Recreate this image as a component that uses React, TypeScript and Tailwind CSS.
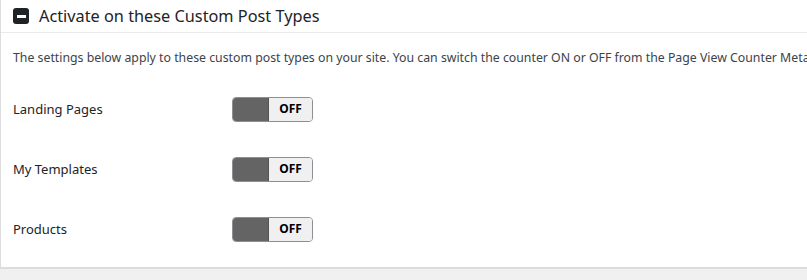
const postTypes = ["Landing Pages", "My Templates", "Products"]

function Toggle() {
  return (
    <div className="flex h-[25px] w-[81px] overflow-hidden rounded-[4px] border border-[#8c8f94]">
      <div className="w-[35px] bg-[#646464]" />
      <div className="flex flex-1 items-center justify-center border-l border-[#555] bg-[#f0f0f0] text-[12px] font-bold text-black">
        OFF
      </div>
    </div>
  )
}

export default function App() {
  return (
    <div
      className="h-[280px] w-[807px] overflow-hidden bg-[#f0f0f1]"
      style={{ fontFamily: '"Noto Sans", sans-serif' }}
    >
      <div className="w-[830px] border-b-2 border-l border-[#dcdcde] bg-white">
        <div className="flex h-[33px] items-center gap-[10px] border-b border-[#ebebeb] pl-[12px]">
          <div className="flex h-[16px] w-[16px] items-center justify-center rounded-[3px] bg-[#1d2327]">
            <div className="h-[3px] w-[9px] bg-white" />
          </div>
          <h2 className="text-[16.3px] text-[#1d2327]">Activate on these Custom Post Types</h2>
        </div>
        <p className="whitespace-nowrap pl-[12px] pt-[16px] text-[12.3px] text-[#3c434a]">
          The settings below apply to these custom post types on your site. You can switch the counter ON or OFF from the Page View Counter Metabox.
        </p>
        <div className="pb-[8px] pl-[12px] pt-[12px]">
          {postTypes.map((t) => (
            <div key={t} className="flex h-[60px] items-center">
              <span className="w-[219px] text-[13px] text-[#1d2327]">{t}</span>
              <Toggle />
            </div>
          ))}
        </div>
      </div>
    </div>
  )
}
